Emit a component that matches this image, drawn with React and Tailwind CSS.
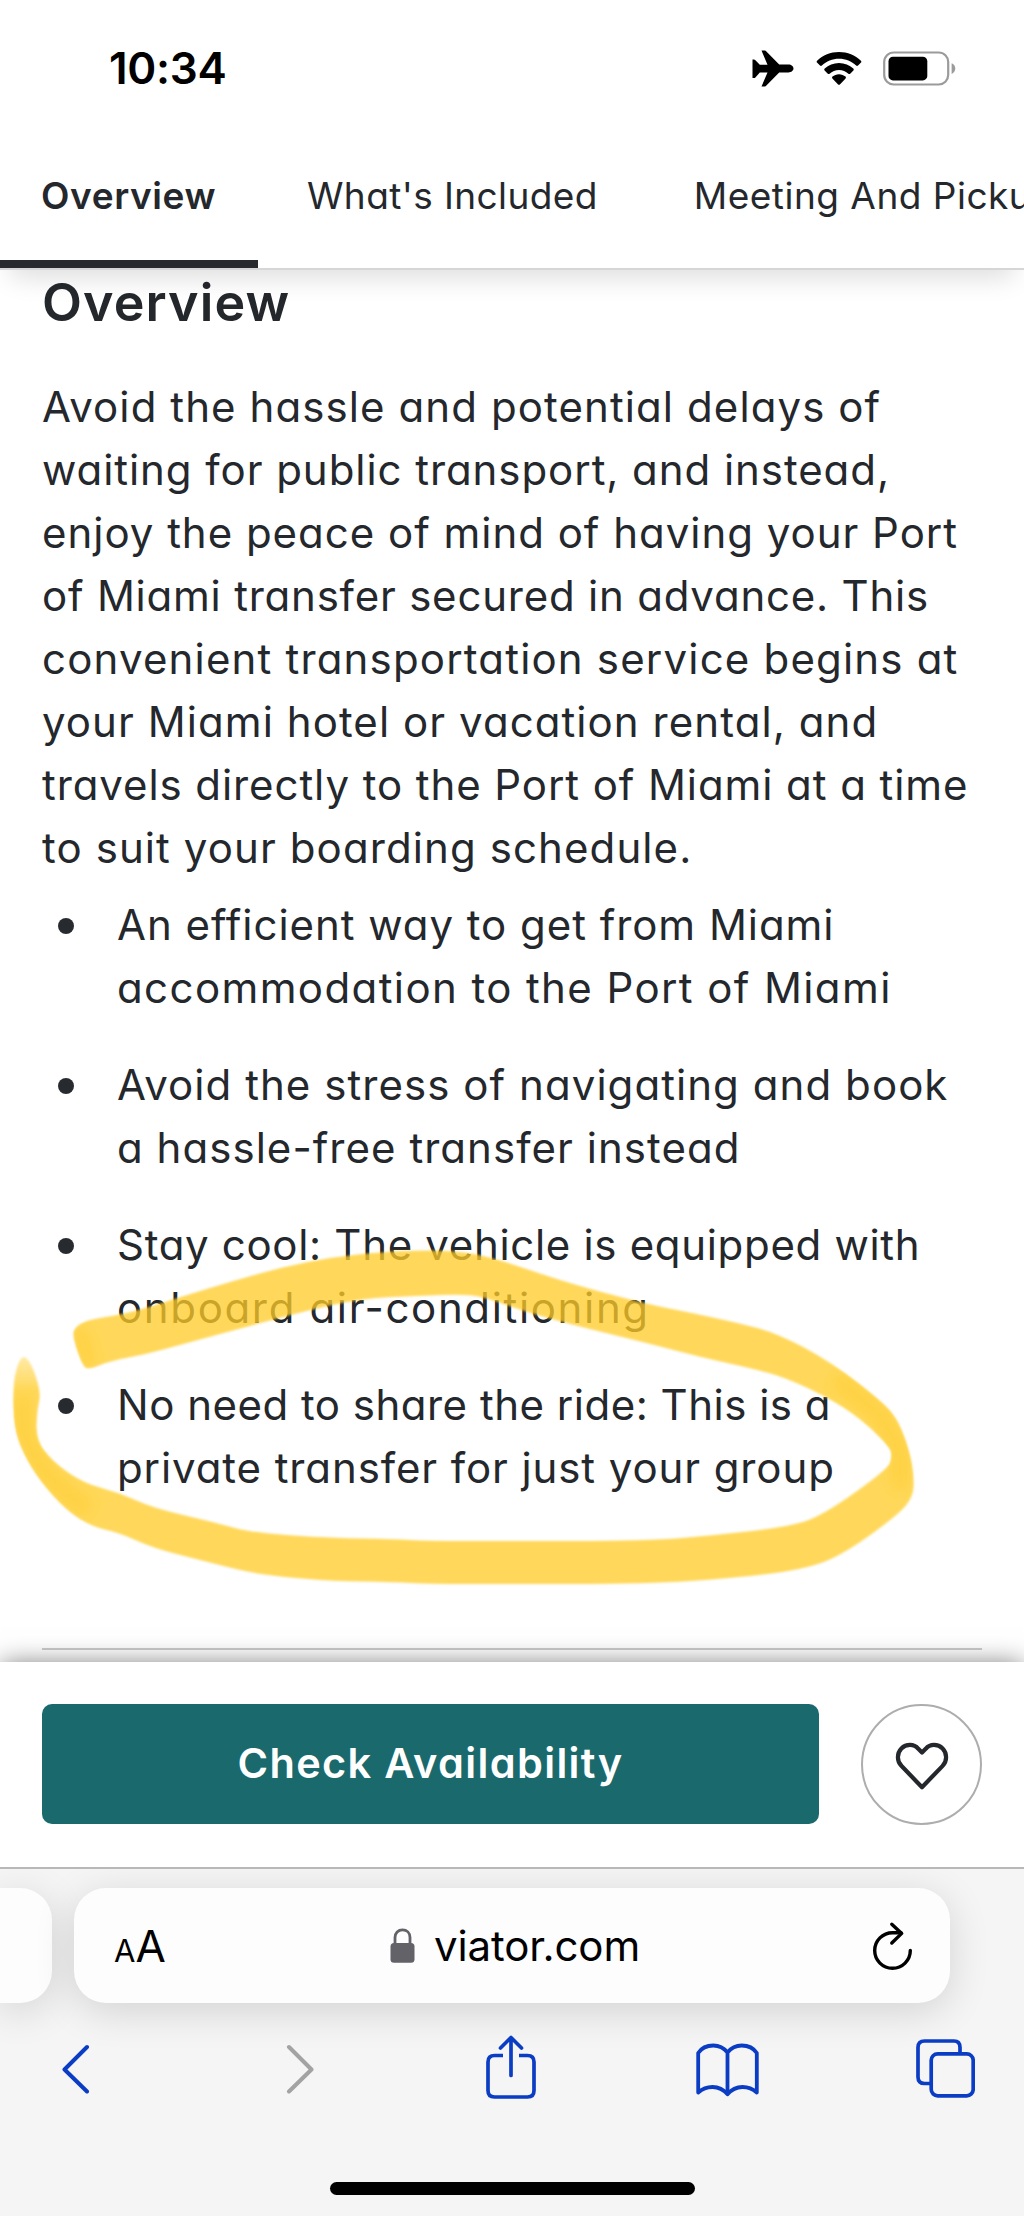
import React from 'react';

const overviewLines = [
  { text: 'Avoid the hassle and potential delays of', tracking: 'tracking-[1.09px]' },
  { text: 'waiting for public transport, and instead,', tracking: 'tracking-[0.94px]' },
  { text: 'enjoy the peace of mind of having your Port', tracking: 'tracking-[0.98px]' },
  { text: 'of Miami transfer secured in advance. This', tracking: 'tracking-[0.78px]' },
  { text: 'convenient transportation service begins at', tracking: 'tracking-[1.18px]' },
  { text: 'your Miami hotel or vacation rental, and', tracking: 'tracking-[1.07px]' },
  { text: 'travels directly to the Port of Miami at a time', tracking: 'tracking-[0.92px]' },
  { text: 'to suit your boarding schedule.', tracking: 'tracking-[1.1px]' },
];

const highlights = [
  [
    { text: 'An efficient way to get from Miami', tracking: 'tracking-[0.96px]' },
    { text: 'accommodation to the Port of Miami', tracking: 'tracking-[1.4px]' },
  ],
  [
    { text: 'Avoid the stress of navigating and book', tracking: 'tracking-[1.06px]' },
    { text: 'a hassle-free transfer instead', tracking: 'tracking-[1.04px]' },
  ],
  [
    { text: 'Stay cool: The vehicle is equipped with', tracking: 'tracking-[0.68px]' },
    { text: 'onboard air-conditioning', tracking: 'tracking-[1.65px]' },
  ],
  [
    { text: 'No need to share the ride: This is a', tracking: 'tracking-[0.5px]' },
    { text: 'private transfer for just your group', tracking: 'tracking-[0.9px]' },
  ],
];

// Outline of the marker stroke, in page pixels
const markerOutline = [
  [74, 1328], [87, 1320], [113, 1316], [140, 1310], [187, 1295], [233, 1281], [283, 1267], [333, 1257],
  [383, 1252], [425, 1250], [467, 1252], [500, 1260], [550, 1277], [590, 1289], [647, 1304], [687, 1312],
  [734, 1322], [777, 1333], [831, 1362], [884, 1403], [899, 1422], [910, 1453], [914, 1477], [913, 1497],
  [898, 1515], [841, 1556], [801, 1570], [734, 1578], [647, 1584], [500, 1584], [430, 1584], [393, 1582],
  [333, 1581], [283, 1577], [247, 1572], [200, 1560], [153, 1548], [120, 1533], [93, 1527], [67, 1511],
  [40, 1481], [23, 1453], [14, 1427], [13, 1387], [17, 1365], [24, 1354], [33, 1367], [41, 1394],
  [37, 1410], [36, 1440], [53, 1462], [83, 1483], [120, 1493], [153, 1508], [213, 1522], [253, 1533],
  [333, 1538], [393, 1539], [427, 1541], [500, 1541], [647, 1541], [717, 1535], [787, 1527], [822, 1516],
  [888, 1469], [892, 1457], [890, 1447], [860, 1418], [827, 1397], [784, 1377], [750, 1368], [700, 1357],
  [647, 1343], [573, 1325], [520, 1310], [490, 1299], [467, 1294], [417, 1296], [367, 1298], [317, 1308],
  [253, 1325], [187, 1343], [147, 1354], [110, 1361], [90, 1369], [83, 1367], [73, 1338],
];

function smoothPath(points) {
  const mid = (a, b) => `${(a[0] + b[0]) / 2} ${(a[1] + b[1]) / 2}`;
  const last = points[points.length - 1];
  const curves = points.map((p, i) => {
    const next = points[(i + 1) % points.length];
    return `Q${p[0]} ${p[1]} ${mid(p, next)}`;
  });
  return `M${mid(last, points[0])} ${curves.join(' ')} Z`;
}

const TextLine = ({ text, tracking }) => (
  <span className={`block whitespace-nowrap ${tracking}`}>{text}</span>
);

const StatusBar = () => (
  <div className="flex h-[136px] items-start justify-between pl-[109px] pr-[68px] text-black">
    <span className="pt-[44px] text-[44px] leading-[48px] font-semibold tracking-[-0.3px]">10:34</span>
    <div className="flex items-center pt-[50px]">
      <svg className="mr-[22px] h-[37px] w-[42px]" viewBox="0 0 42 37" fill="currentColor">
        <path d="M9.5 0.5h3.2c.7 0 1.3.3 1.7.9L27.2 14.6h9.3c2.8 0 5 1.9 5 3.9s-2.2 3.9-5 3.9h-9.3L14.4 35.6c-.4.6-1 .9-1.7.9H9.5l6-14.1H7.8l-4.4 5c-.4.5-1 .7-1.6.7H.5V9.5h1.3c.6 0 1.2.2 1.6.7l4.4 4.6h7.7z" />
      </svg>
      <svg className="mr-[21px] h-[35px] w-[46px]" viewBox="0 0 46 35" fill="currentColor">
        <path d="M23 1C14.5 1 6.8 4.3 1.1 9.7c-.6.6-.6 1.3-.1 1.9l3 3c.5.5 1.3.5 1.900 0C10.3 10.3 16.4 7.7 23 7.7s12.7 2.6 17.1 6.9c.6.5 1.4.5 1.9 0l3-3c.5-.6.5-1.3-.1-1.900C39.2 4.3 31.5 1 23 1z" />
        <path d="M23 12c-5.5 0-10.5 2.1-14.3 5.6-.6.5-.6 1.3-.1 1.9l3.2 3.2c.5.5 1.2.5 1.8 0 2.5-2.3 5.8-3.7 9.4-3.7s6.9 1.4 9.4 3.7c.6.5 1.3.5 1.8 0l3.2-3.2c.5-.6.5-1.4-.1-1.9C33.5 14.1 28.5 12 23 12z" />
        <path d="M23 23.2c-2.5 0-4.8.9-6.5 2.4-.6.5-.6 1.2-.1 1.8l5.7 6c.5.6 1.3.6 1.8 0l5.7-6c.5-.6.5-1.3-.1-1.8-1.7-1.5-4-2.4-6.5-2.4z" />
      </svg>
      <svg className="h-[35px] w-[73px]" viewBox="0 0 73 35">
        <rect x="1.2" y="1.5" width="64" height="32" rx="9.5" fill="none" stroke="#9b9b9b" strokeWidth="2.2" />
        <rect x="5.5" y="5.8" width="38.8" height="23.6" rx="4.5" fill="#000" />
        <path d="M68.6 12.3c2.200.8 3.7 2.9 3.7 5.3s-1.5 4.5-3.7 5.3z" fill="#9b9b9b" />
      </svg>
    </div>
  </div>
);

const TabBar = () => (
  <nav className="relative z-10 flex h-[134px] overflow-visible bg-white shadow-[0_18px_24px_-10px_rgba(0,0,0,0.13)]">
    <div className="flex w-full overflow-hidden border-b-2 border-[#d6d6d6] text-[37px] leading-[48px] whitespace-nowrap">
      <div className="-mb-0.5 w-[258px] shrink-0 border-b-[10px] border-[#272b30] pt-[36px] pl-[41px] font-semibold tracking-[0.6px]">
        Overview
      </div>
      <div className="shrink-0 pt-[36px] pl-[49px] tracking-[0.4px]">What's Included</div>
      <div className="shrink-0 pt-[36px] pl-[96px] tracking-[0.5px]">Meeting And Pickup</div>
    </div>
  </nav>
);

const MarkerCircle = () => (
  <svg
    className="pointer-events-none absolute top-0 left-0 h-[2216px] w-[1024px]"
    viewBox="0 0 1024 2216"
    fill="none"
  >
    <defs>
      <filter id="soft" x="-5%" y="-5%" width="110%" height="110%">
        <feGaussianBlur stdDeviation="1.1" />
      </filter>
      <filter id="softer" x="-50%" y="-50%" width="200%" height="200%">
        <feGaussianBlur stdDeviation="7" />
      </filter>
      <linearGradient id="fadeIn" x1="0" y1="1354" x2="0" y2="1390" gradientUnits="userSpaceOnUse">
        <stop offset="0" stopColor="#fff" stopOpacity="0.5" />
        <stop offset="1" stopColor="#fff" />
      </linearGradient>
      <mask id="startFade" maskUnits="userSpaceOnUse" x="0" y="1230" width="1024" height="380">
        <rect x="0" y="1230" width="1024" height="380" fill="#fff" />
        <rect x="0" y="1340" width="48" height="50" fill="#000" />
        <rect x="0" y="1340" width="48" height="50" fill="url(#fadeIn)" />
      </mask>
      <clipPath id="markerShape">
        <path d={smoothPath(markerOutline)} />
      </clipPath>
    </defs>
    <g mask="url(#startFade)">
      <path d={smoothPath(markerOutline)} fill="#ffcc28" fillOpacity="0.76" filter="url(#soft)" />
    </g>
    {/* Ink builds up where the marker turns */}
    <g clipPath="url(#markerShape)">
      <g filter="url(#softer)" stroke="#ffc91f" strokeOpacity="0.45">
        <path d="M22 1395V1430Q40 1480 90 1510" strokeWidth="20" />
        <path d="M78 1328L90 1366" strokeWidth="16" />
        <path d="M835 1378L880 1415L900 1450V1490" strokeWidth="20" />
      </g>
    </g>
  </svg>
);

const OverviewSection = () => (
  <main className="h-[1392px] overflow-hidden px-[42px] text-[42px] leading-[63px]">
    <h2 className="pt-px text-[52px] leading-[64px] font-semibold tracking-[1.1px]">Overview</h2>
    <p className="mt-[40px]">
      {overviewLines.map((line) => (
        <TextLine key={line.text} {...line} />
      ))}
    </p>
    <ul className="mt-[14px] flex flex-col gap-[34px]">
      {highlights.map((lines) => (
        <li key={lines[0].text} className="flex">
          <span className="mt-[25px] mr-[43px] ml-[16px] size-4 shrink-0 rounded-full bg-[#272b30]" />
          <div>
            {lines.map((line) => (
              <TextLine key={line.text} {...line} />
            ))}
          </div>
        </li>
      ))}
    </ul>
    <hr className="mt-[149px] border-t-2 border-[#cccccc]" />
  </main>
);

const BookingBar = () => (
  <div className="relative flex h-[205px] items-start justify-between bg-white px-[42px] pt-[42px] shadow-[0_0_24px_-1px_rgba(0,0,0,0.5)]">
    <button className="h-[120px] w-[777px] rounded-[10px] bg-[#1a6a6d] pb-[3px] text-[41.5px] leading-[56px] font-semibold tracking-[1.35px] text-white">
      Check Availability
    </button>
    <button className="flex size-[121px] items-center justify-center rounded-full border-[2.5px] border-[#adadad]">
      <svg className="mt-[3px] h-[48px] w-[54px]" viewBox="0 0 54 48" fill="none" stroke="#24282d" strokeWidth="4.2" strokeLinejoin="round">
        <path d="M27 10.5L23.3 6.8C21.1 4.2 18.2 2.9 15 2.9 8.2 2.9 2.9 8.3 2.9 15.2c0 3.5 1.3 6.5 3.7 8.9L27 45.2l20.4-21.1c2.4-2.4 3.7-5.4 3.7-8.9C51.1 8.3 45.8 2.9 39 2.9c-3.2 0-6.1 1.3-8.3 3.9z" />
      </svg>
    </button>
  </div>
);

const AddressBar = () => (
  <div className="flex gap-[22px]">
    <div className="h-[115px] w-[52px] shrink-0 rounded-r-[32px] bg-[#fdfdfd] shadow-[0_8px_40px_rgba(0,0,0,0.14)]" />
    <div className="flex h-[115px] w-[876px] items-center rounded-[32px] bg-[#fdfdfd] pr-[37px] pl-[40px] text-black shadow-[0_8px_40px_rgba(0,0,0,0.14)]">
      <div className="flex w-[276px] items-baseline">
        <span className="text-[31px]">A</span>
        <span className="text-[44px] tracking-tight">A</span>
      </div>
      <svg className="mr-[19px] h-[35px] w-[25px]" viewBox="0 0 25 35">
        <path d="M5 17V9.5C5 4.8 8.2 1.8 12.5 1.8S20 4.8 20 9.5V17" fill="none" stroke="#636268" strokeWidth="2.8" />
        <rect x="0.5" y="15" width="24" height="19.8" rx="3.5" fill="#636268" />
      </svg>
      <span className="flex-1 text-[42px] tracking-[-0.1px] [font-feature-settings:normal]">viator.com</span>
      <svg className="mb-[2px] h-[50px] w-[40px]" viewBox="0 0 40 50" fill="none" stroke="currentColor" strokeWidth="3.4" strokeLinecap="round" strokeLinejoin="round">
        <path d="M37.3 30.5A17.8 17.8 0 1 1 19.5 12.700H28" />
        <path d="M18.8 4.2L28.7 13.4L18.8 23" />
      </svg>
    </div>
  </div>
);

const BrowserToolbar = () => (
  <div className="flex items-start justify-between pt-[32px] pr-[49px] pl-[61px] text-[#0b3cc4]">
    <svg className="mt-[9px] h-[50px] w-[29px]" viewBox="0 0 29 50" fill="none" stroke="currentColor" strokeWidth="4" strokeLinecap="round" strokeLinejoin="round">
      <path d="M26 3L3.5 25.5L26 47.5" />
    </svg>
    <svg className="mt-[9px] ml-[68px] h-[50px] w-[29px] text-[#a3a3a3]" viewBox="0 0 29 50" fill="none" stroke="currentColor" strokeWidth="4" strokeLinecap="round" strokeLinejoin="round">
      <path d="M3 3L25.5 25.5L3 47.5" />
    </svg>
    <svg className="ml-[43px] h-[64px] w-[50px]" viewBox="0 0 50 64" fill="none" stroke="currentColor" strokeWidth="3.7" strokeLinecap="round" strokeLinejoin="round">
      <path d="M17 20.5H8.5Q2 20.5 2 27V55.5Q2 62 8.5 62H41.5Q48 62 48 55.5V27Q48 20.5 41.5 20.5H33" strokeLinecap="butt" />
      <path d="M25 40.5V3M14.5 13L25 2.5L35.5 13" />
    </svg>
    <svg className="mt-[8px] ml-[32px] h-[54px] w-[63px]" viewBox="0 0 63 54" fill="none" stroke="currentColor" strokeWidth="3.8" strokeLinecap="round" strokeLinejoin="round">
      <path d="M31.5 9.5C27.5 4.5 22.5 2.5 17.3 2.5C11.5 2.5 5.5 5 2.2 10V49.5C6 46 11 44 16.500 44C22.5 44 27.5 46.5 31.5 51.3C35.5 46.5 40.5 44 46.5 44C52 44 57 46 60.8 49.5V10C57.5 5 51.5 2.5 45.7 2.5C40.5 2.5 35.5 4.5 31.5 9.5ZM31.5 9.5V51" />
    </svg>
    <svg className="mt-[4px] ml-[29px] h-[59px] w-[59px]" viewBox="0 0 59 59" fill="none" stroke="currentColor" strokeWidth="3.7">
      <path d="M15 44.5H8.5Q2 44.5 2 38V8.5Q2 2 8.5 2H38Q44 2 44 8.5V14.5" />
      <rect x="15.2" y="14.8" width="42" height="42" rx="6.5" />
    </svg>
  </div>
);

const BrowserChrome = () => (
  <div className="relative flex h-[349px] flex-col overflow-hidden border-t-2 border-[#b8b8b8] bg-[#f5f5f6] pt-[19px]">
    <AddressBar />
    <BrowserToolbar />
    <div className="mx-auto mt-auto mb-[21px] h-[13px] w-[365px] rounded-full bg-black" />
  </div>
);

export default function App() {
  return (
    <div className="relative h-[2216px] w-[1024px] overflow-hidden bg-white font-['Inter',sans-serif] text-[#24282d] [font-feature-settings:'cv11']">
      <StatusBar />
      <TabBar />
      <OverviewSection />
      <BookingBar />
      <BrowserChrome />
      <MarkerCircle />
    </div>
  );
}
